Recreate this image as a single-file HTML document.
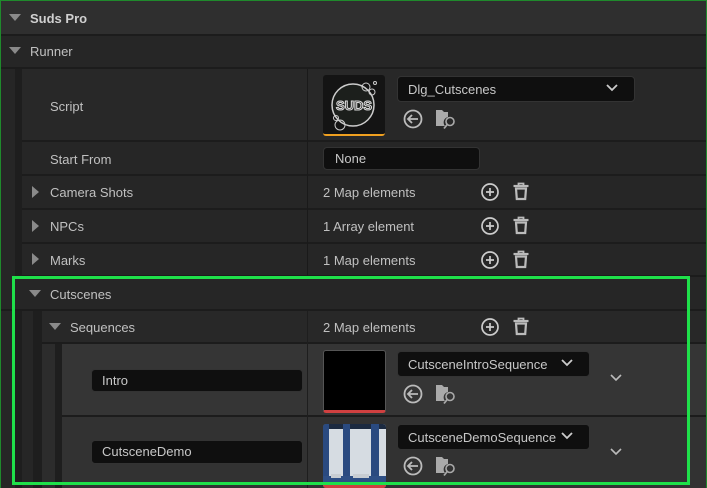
<!DOCTYPE html><html><head><style>
*{margin:0;padding:0;box-sizing:border-box}
body{width:707px;height:488px;background:#1a1a1a;font-family:"Liberation Sans",sans-serif;color:#c8c8c8;font-size:13px;position:relative;overflow:hidden}
.a{position:absolute}
.row{position:absolute;left:0;width:707px;border-bottom:2px solid #1c1c1c}
.lbl{position:absolute;font-size:13px;color:#c0c0c0}
.tri-d{position:absolute;width:0;height:0;border-left:6px solid transparent;border-right:6px solid transparent;border-top:7px solid #8a8a8a}
.tri-r{position:absolute;width:0;height:0;border-top:6px solid transparent;border-bottom:6px solid transparent;border-left:7px solid #8a8a8a}
.box{position:absolute;background:#0f0f0f;border:1px solid #333;border-radius:4px;color:#c8c8c8;font-size:13px}
</style></head><body>
<div class="a" style="left:0;top:0;width:707px;height:488px;border:1px solid #1f8a2c"></div>
<div class="row" style="top:1px;height:35px;background:#2f2f2f;left:1px;width:705px"></div>
<div class="tri-d" style="left:9px;top:14px"></div>
<div class="lbl" style="left:30px;top:11px;font-weight:bold;color:#d0d0d0">Suds Pro</div>
<div class="row" style="top:36px;height:33px;background:#262626;left:1px;width:705px"></div>
<div class="tri-d" style="left:9px;top:47px"></div>
<div class="lbl" style="left:30px;top:44px">Runner</div>
<div class="a" style="left:1px;top:69px;width:705px;height:419px;background:#262626"></div>
<div class="a" style="left:15px;top:69px;width:7px;height:419px;background:#1e1e1e"></div>
<div class="row" style="top:69px;height:73px;left:22px;width:684px;background:#282828"></div>
<div class="lbl" style="left:50px;top:99px">Script</div>
<div class="a" style="left:323px;top:75px;width:62px;height:61px;background:#141414;border-radius:3px;border-bottom:2px solid #f0a020;overflow:hidden">
<svg width="62" height="60" viewBox="0 0 62 60"><circle cx="30" cy="30" r="21" fill="#1c1f1c" stroke="#ccc" stroke-width="1.5"/><circle cx="43" cy="12" r="4" fill="none" stroke="#ccc"/><circle cx="49" cy="17" r="3" fill="none" stroke="#ccc"/><circle cx="52" cy="8" r="1.5" fill="none" stroke="#ccc"/><circle cx="17" cy="50" r="5" fill="none" stroke="#ccc"/><circle cx="13" cy="43" r="2.5" fill="none" stroke="#ccc"/><text x="31" y="35" font-size="13" font-weight="bold" text-anchor="middle" fill="#333" stroke="#ddd" stroke-width="1" font-family="Liberation Sans">SUDS</text></svg></div>
<div class="box" style="left:397px;top:76px;width:238px;height:26px;padding:5px 0 0 10px">Dlg_Cutscenes</div>
<svg class="a" style="left:605px;top:83px" width="14" height="10"><path d="M2 2L7 7L12 2" fill="none" stroke="#ccc" stroke-width="1.8"/></svg>
<div class="row" style="top:142px;height:34px;left:22px;width:684px"></div>
<div class="lbl" style="left:50px;top:152px">Start From</div>
<div class="box" style="left:323px;top:147px;width:157px;height:23px;padding:3px 0 0 11px">None</div>
<div class="row" style="top:176px;height:34px;left:22px;width:684px"></div>
<div class="tri-r" style="left:32px;top:186px"></div>
<div class="lbl" style="left:50px;top:185px">Camera Shots</div>
<div class="lbl" style="left:323px;top:185px">2 Map elements</div>
<div class="row" style="top:210px;height:34px;left:22px;width:684px"></div>
<div class="tri-r" style="left:32px;top:220px"></div>
<div class="lbl" style="left:50px;top:219px">NPCs</div>
<div class="lbl" style="left:323px;top:219px">1 Array element</div>
<div class="row" style="top:244px;height:33px;left:22px;width:684px"></div>
<div class="tri-r" style="left:32px;top:253px"></div>
<div class="lbl" style="left:50px;top:253px">Marks</div>
<div class="lbl" style="left:323px;top:253px">1 Map elements</div>
<div class="a" style="left:307px;top:69px;width:1px;height:208px;background:#1a1a1a"></div>
<div class="row" style="top:277px;height:34px;left:1px;width:705px;background:#262626"></div>
<div class="tri-d" style="left:29px;top:290px"></div>
<div class="lbl" style="left:50px;top:287px">Cutscenes</div>
<div class="a" style="left:22px;top:311px;width:684px;height:177px;background:#262626"></div>
<div class="a" style="left:33px;top:311px;width:9px;height:177px;background:#1e1e1e"></div>
<div class="row" style="top:311px;height:33px;left:42px;width:664px;background:#282828"></div>
<div class="tri-d" style="left:49px;top:323px"></div>
<div class="lbl" style="left:70px;top:320px">Sequences</div>
<div class="lbl" style="left:323px;top:320px">2 Map elements</div>
<div class="a" style="left:42px;top:344px;width:664px;height:144px;background:#2c2c2c"></div>
<div class="a" style="left:55px;top:344px;width:7px;height:144px;background:#1e1e1e"></div>
<div class="row" style="top:344px;height:73px;left:62px;width:644px;background:#353535"></div>
<div class="row" style="top:417px;height:71px;left:62px;width:644px;background:#323232;border:none"></div>
<div class="a" style="left:307px;top:311px;width:1px;height:177px;background:#1e1e1e"></div>
<div class="box" style="left:91px;top:369px;width:212px;height:23px;padding:3px 0 0 10px">Intro</div>
<div class="a" style="left:323px;top:350px;width:63px;height:63px;background:#000;border:1px solid #555;border-radius:3px;border-bottom:3px solid #d04040"></div>
<div class="box" style="left:397px;top:351px;width:193px;height:26px;padding:5px 0 0 10px">CutsceneIntroSequence</div>
<svg class="a" style="left:560px;top:358px" width="14" height="10"><path d="M2 2L7 7L12 2" fill="none" stroke="#ccc" stroke-width="1.8"/></svg>
<svg class="a" style="left:609px;top:373px" width="14" height="10"><path d="M2 2L7 7L12 2" fill="none" stroke="#bbb" stroke-width="1.6"/></svg>
<div class="box" style="left:91px;top:440px;width:212px;height:24px;padding:3px 0 0 10px">CutsceneDemo</div>
<div class="a" style="left:323px;top:424px;width:63px;height:64px;background:#d6dce2;border-radius:3px;overflow:hidden">
<div class="a" style="left:0;top:0;width:63px;height:5px;background:#1c2a40"></div>
<div class="a" style="left:0;top:0;width:6px;height:64px;background:#2a4a80"></div>
<div class="a" style="left:20px;top:0;width:7px;height:55px;background:#2a4a80"></div>
<div class="a" style="left:48px;top:0;width:8px;height:55px;background:#2a4a80"></div>
<div class="a" style="left:0;top:52px;width:63px;height:12px;background:#2e4f85"></div>
<div class="a" style="left:8px;top:50px;width:10px;height:4px;background:#c8cdd2"></div>
<div class="a" style="left:30px;top:50px;width:16px;height:4px;background:#c8cdd2"></div>
<div class="a" style="left:0;top:61px;width:63px;height:3px;background:#d04040"></div></div>
<div class="box" style="left:397px;top:424px;width:193px;height:26px;padding:5px 0 0 10px">CutsceneDemoSequence</div>
<svg class="a" style="left:560px;top:431px" width="14" height="10"><path d="M2 2L7 7L12 2" fill="none" stroke="#ccc" stroke-width="1.8"/></svg>
<svg class="a" style="left:609px;top:447px" width="14" height="10"><path d="M2 2L7 7L12 2" fill="none" stroke="#bbb" stroke-width="1.6"/></svg>
<svg width="0" height="0" style="position:absolute"><defs>
<symbol id="pl" viewBox="0 0 20 20"><circle cx="10" cy="10" r="8" fill="none" stroke="#ccc" stroke-width="1.7"/><path d="M10 6v8M6 10h8" stroke="#ccc" stroke-width="1.7"/></symbol>
<symbol id="tr" viewBox="0 0 20 20"><path d="M2.5 5h15" stroke="#bbb" stroke-width="2.2"/><path d="M7.5 4.5V2.5h5v2" fill="none" stroke="#bbb" stroke-width="1.8"/><path d="M5 7.5h10l-0.8 10.5H5.8z" fill="none" stroke="#bbb" stroke-width="2.2"/></symbol>
<symbol id="bk" viewBox="0 0 22 22"><circle cx="11" cy="11" r="8.5" fill="none" stroke="#bbb" stroke-width="1.8"/><path d="M16 11H7M10 7L6 11L10 15" fill="none" stroke="#bbb" stroke-width="1.8"/></symbol>
<symbol id="fd" viewBox="0 0 24 24"><path d="M2 3h6l2 2h4v5a5.5 5.5 0 0 0-3 9H2z" fill="#aaa"/><circle cx="16" cy="14.5" r="4" fill="none" stroke="#aaa" stroke-width="1.6"/><path d="M13.2 17.5L10 21.5" stroke="#aaa" stroke-width="1.8"/></symbol></defs></svg>
<svg class="a" style="left:402px;top:108px" width="22" height="22"><use href="#bk"/></svg>
<svg class="a" style="left:434px;top:107px" width="24" height="24"><use href="#fd"/></svg>
<svg class="a" style="left:402px;top:383px" width="22" height="22"><use href="#bk"/></svg>
<svg class="a" style="left:434px;top:382px" width="24" height="24"><use href="#fd"/></svg>
<svg class="a" style="left:402px;top:455px" width="22" height="22"><use href="#bk"/></svg>
<svg class="a" style="left:434px;top:454px" width="24" height="24"><use href="#fd"/></svg>
<svg class="a" style="left:480px;top:182px" width="20" height="20"><use href="#pl"/></svg>
<svg class="a" style="left:511px;top:181px" width="20" height="20"><use href="#tr"/></svg>
<svg class="a" style="left:480px;top:216px" width="20" height="20"><use href="#pl"/></svg>
<svg class="a" style="left:511px;top:215px" width="20" height="20"><use href="#tr"/></svg>
<svg class="a" style="left:480px;top:250px" width="20" height="20"><use href="#pl"/></svg>
<svg class="a" style="left:511px;top:249px" width="20" height="20"><use href="#tr"/></svg>
<svg class="a" style="left:480px;top:317px" width="20" height="20"><use href="#pl"/></svg>
<svg class="a" style="left:511px;top:316px" width="20" height="20"><use href="#tr"/></svg>
<div class="a" style="left:12px;top:276px;width:678px;height:209px;border:3px solid #1fe04a"></div>
</body></html>
